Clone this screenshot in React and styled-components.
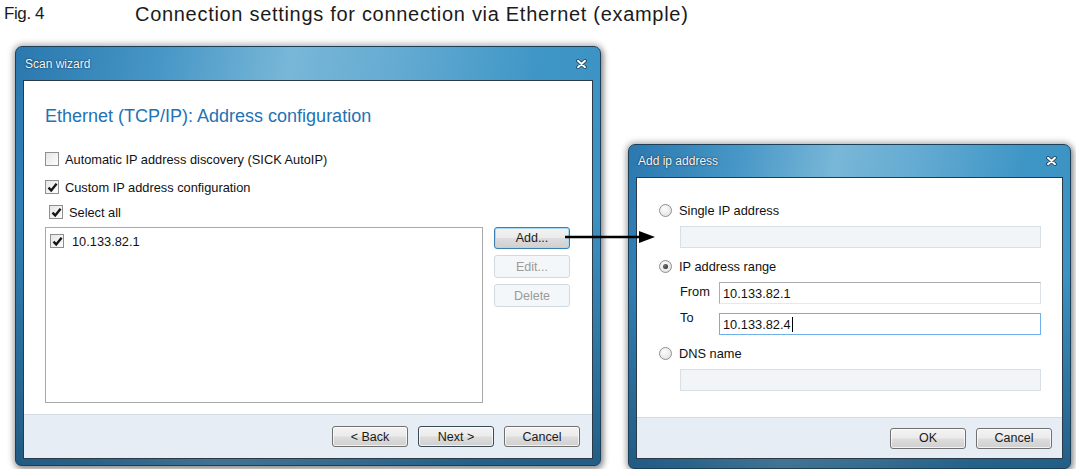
import styled, { createGlobalStyle, css } from "styled-components";

const Global = createGlobalStyle`
  html, body { margin: 0; padding: 0; background: #fff; }
  body { overflow: hidden; font-family: "Liberation Sans", Arial, sans-serif; }
`;

const Page = styled.div`
  position: relative;
  width: 1076px;
  height: 469px;
  overflow: hidden;
`;

const Caption = styled.div`
  display: flex;
  align-items: center;
  height: 28px;
  padding-left: 4px;
  font-family: "Liberation Sans Narrow", "Liberation Sans", Arial, sans-serif;
  color: #1b1b1b;
`;

const FigNo = styled.span`
  width: 131px;
  font-size: 17px;
  letter-spacing: -0.4px;
`;

const FigText = styled.span`
  font-size: 20px;
  letter-spacing: 0.7px;
`;

const Stage = styled.div`
  display: flex;
  align-items: flex-start;
`;

const Window = styled.div`
  display: flex;
  flex-direction: column;
  width: ${(p) => p.$w}px;
  height: ${(p) => p.$h}px;
  margin-top: ${(p) => p.$top}px;
  margin-left: ${(p) => p.$left}px;
  padding: 0 7px ${(p) => p.$bottom}px;
  box-sizing: border-box;
  border-radius: 7px 7px 6px 6px;
  border: 1px solid #1d3f57;
  background:
    linear-gradient(180deg, rgba(10, 40, 70, 0) 0%, rgba(10, 40, 70, 0) 40%, rgba(10, 45, 75, 0.5) 100%),
    linear-gradient(100deg, #2a78ae 0%, #4696c6 22%, #78b7d7 42%, #65abd2 58%, #3e96c6 80%, #3a90c2 100%);
  box-shadow: 0 0 6px 2px rgba(0, 0, 0, 0.28), 2px 3px 6px rgba(0, 0, 0, 0.3);
`;

const TitleBar = styled.div`
  display: flex;
  align-items: center;
  justify-content: space-between;
  height: ${(p) => p.$h}px;
  padding: 0 6px 0 2px;
  flex-shrink: 0;
`;

const Title = styled.span`
  font-size: 12px;
  color: #f5f9fc;
  text-shadow: 0 0 2px rgba(20, 50, 80, 0.9), 0 0 1px rgba(20, 50, 80, 0.9);
`;

const Client = styled.div`
  flex: 1;
  display: flex;
  flex-direction: column;
  background: #fff;
  border: 1px solid #2c3a47;
`;

const Content = styled.div`
  flex: 1;
  display: flex;
  flex-direction: column;
  padding: ${(p) => p.$pad};
`;

const Heading = styled.div`
  font-size: 18px;
  line-height: 22px;
  color: #2272b4;
  margin-bottom: 22px;
`;

const Row = styled.label`
  display: flex;
  align-items: center;
  gap: ${(p) => p.$gap || 7}px;
  height: ${(p) => p.$h || 20}px;
  margin-top: ${(p) => p.$mt || 0}px;
  padding-left: ${(p) => p.$indent || 0}px;
  font-size: 12.8px;
  color: #111;
`;

const Box = styled.span`
  width: 14px;
  height: 14px;
  box-sizing: border-box;
  border: 1px solid #8e8f8f;
  background: linear-gradient(135deg, #e6e6e6, #fdfdfd);
  display: flex;
  align-items: center;
  justify-content: center;
  flex-shrink: 0;
`;

const Check = ({ on }) => (
  <Box>
    {on && (
      <svg width="11" height="11" viewBox="0 0 11 11">
        <path d="M1.5 5.6 L4.2 8.4 L9.6 1.8" fill="none" stroke="#151515" strokeWidth="2.3" />
      </svg>
    )}
  </Box>
);

const RadioDot = styled.span`
  width: 13px;
  height: 13px;
  box-sizing: border-box;
  border-radius: 50%;
  border: 1px solid #8e8f8f;
  background: radial-gradient(circle at 40% 35%, #fdfdfd, #dcdcdc);
  display: flex;
  align-items: center;
  justify-content: center;
  flex-shrink: 0;
  &::after {
    content: "";
    display: ${(p) => (p.$on ? "block" : "none")};
    width: 5px;
    height: 5px;
    border-radius: 50%;
    background: radial-gradient(circle at 35% 35%, #777, #1f1f1f);
  }
`;

const ListArea = styled.div`
  display: flex;
  gap: 11px;
  margin-top: 5px;
`;

const List = styled.div`
  width: 438px;
  height: 176px;
  box-sizing: border-box;
  border: 1px solid #a9a9a9;
  padding: 5px 0 0 4px;
`;

const ButtonCol = styled.div`
  display: flex;
  flex-direction: column;
  gap: 6px;
`;

const Button = styled.button`
  width: 76px;
  height: ${(p) => p.$h || 22}px;
  box-sizing: border-box;
  padding: 0;
  border-radius: 3px;
  font-family: "Liberation Sans", Arial, sans-serif;
  font-size: 12.5px;
  color: #1a1a1a;
  border: 1px solid #707070;
  background: linear-gradient(180deg, #f3f3f3 0%, #ebebeb 48%, #dddddd 52%, #cfcfcf 100%);
  box-shadow: inset 0 0 0 1px rgba(255, 255, 255, 0.7);
  ${(p) =>
    p.$focus &&
    css`
      border-color: #3c7fb1;
      box-shadow: inset 0 0 0 1px #a7d9f5;
    `}
  ${(p) =>
    p.$default &&
    css`
      border-color: #3c4a55;
    `}
  ${(p) =>
    p.disabled &&
    css`
      color: #9a9a9a;
      border-color: #d0dae2;
      background: #f4f7f9;
      box-shadow: none;
    `}
`;

const Footer = styled.div`
  display: flex;
  align-items: center;
  justify-content: flex-end;
  gap: 10px;
  height: ${(p) => p.$h}px;
  padding-right: ${(p) => p.$pr}px;
  background: #e7edf4;
  border-top: 1px solid #d3dce6;
  flex-shrink: 0;
`;

const Indent = styled.div`
  padding-left: 21px;
  margin-top: ${(p) => p.$mt || 0}px;
  display: flex;
  flex-direction: column;
  gap: 9px;
`;

const Field = styled.div`
  display: flex;
  align-items: flex-start;
`;

const FieldLabel = styled.span`
  width: 39px;
  font-size: 12.8px;
  color: #111;
  line-height: 20px;
  margin-top: ${(p) => p.$mt || 0}px;
`;

const Input = styled.div`
  width: ${(p) => p.$w}px;
  height: 22px;
  box-sizing: border-box;
  display: flex;
  align-items: center;
  padding-left: 3px;
  font-size: 12.8px;
  color: #111;
  background: #fff;
  border: 1px solid #abadb3;
  border-bottom-color: #e3e9ef;
  border-right-color: #dbdfe6;
  ${(p) =>
    p.$disabled &&
    css`
      background: #f1f5f8;
      border: 1px solid #d8dfe5;
    `}
  ${(p) =>
    p.$focus &&
    css`
      border: 1px solid #6fb0e8;
    `}
`;

const Caret = styled.span`
  display: inline-block;
  width: 1px;
  height: 15px;
  background: #000;
  margin-left: 1px;
`;

const CloseX = () => (
  <svg width="11" height="10" viewBox="0 0 11 10">
    <path d="M2 1.8 L9 8.2 M9 1.8 L2 8.2" stroke="#23435b" strokeWidth="3.6" strokeLinecap="round" />
    <path d="M2 1.8 L9 8.2 M9 1.8 L2 8.2" stroke="#fff" strokeWidth="2" strokeLinecap="round" />
  </svg>
);

const Arrow = styled.svg`
  position: absolute;
  left: 563px;
  top: 229px;
  z-index: 2;
`;

export default function App() {
  return (
    <Page>
      <Global />
      <Caption>
        <FigNo>Fig. 4</FigNo>
        <FigText>Connection settings for connection via Ethernet (example)</FigText>
      </Caption>
      <Stage>
        <Window $w={586} $h={420} $top={18} $left={15} $bottom={6}>
          <TitleBar $h={33}>
            <Title>Scan wizard</Title>
            <CloseX />
          </TitleBar>
          <Client>
            <Content $pad="24px 21px 0">
              <Heading>Ethernet (TCP/IP): Address configuration</Heading>
              <Row $gap={6}>
                <Check />
                Automatic IP address discovery (SICK AutoIP)
              </Row>
              <Row $mt={8} $gap={6}>
                <Check on />
                Custom IP address configuration
              </Row>
              <Row $mt={5} $indent={4} $gap={6}>
                <Check on />
                Select all
              </Row>
              <ListArea>
                <List>
                  <Row $h={16} $gap={8}>
                    <Check on />
                    10.133.82.1
                  </Row>
                </List>
                <ButtonCol>
                  <Button $focus>Add...</Button>
                  <Button disabled $h={23}>Edit...</Button>
                  <Button disabled $h={23}>Delete</Button>
                </ButtonCol>
              </ListArea>
            </Content>
            <Footer $h={43} $pr={12}>
              <Button $h={21}>&lt; Back</Button>
              <Button $h={21} $default>Next &gt;</Button>
              <Button $h={21}>Cancel</Button>
            </Footer>
          </Client>
        </Window>

        <Window $w={443} $h={325} $top={116} $left={27} $bottom={9}>
          <TitleBar $h={32}>
            <Title>Add ip address</Title>
            <CloseX />
          </TitleBar>
          <Client>
            <Content $pad="23px 21px 0 22px">
              <Row $h={18}>
                <RadioDot />
                Single IP address
              </Row>
              <Indent $mt={7}>
                <Input $w={361} $disabled />
              </Indent>
              <Row $h={18} $mt={9}>
                <RadioDot $on />
                IP address range
              </Row>
              <Indent $mt={7}>
                <Field>
                  <FieldLabel>From</FieldLabel>
                  <Input $w={322}>10.133.82.1</Input>
                </Field>
                <Field>
                  <FieldLabel $mt={-5}>To</FieldLabel>
                  <Input $w={322} $focus>
                    10.133.82.4<Caret />
                  </Input>
                </Field>
              </Indent>
              <Row $h={18} $mt={9}>
                <RadioDot />
                DNS name
              </Row>
              <Indent $mt={7}>
                <Input $w={361} $disabled />
              </Indent>
            </Content>
            <Footer $h={40} $pr={10}>
              <Button $h={21}>OK</Button>
              <Button $h={21}>Cancel</Button>
            </Footer>
          </Client>
        </Window>
      </Stage>
      <Arrow width="92" height="16" viewBox="0 0 92 16">
        <line x1="2" y1="8" x2="78" y2="8" stroke="#000" strokeWidth="2.5" />
        <polygon points="76,2 92,8 76,14" fill="#000" />
      </Arrow>
    </Page>
  );
}
